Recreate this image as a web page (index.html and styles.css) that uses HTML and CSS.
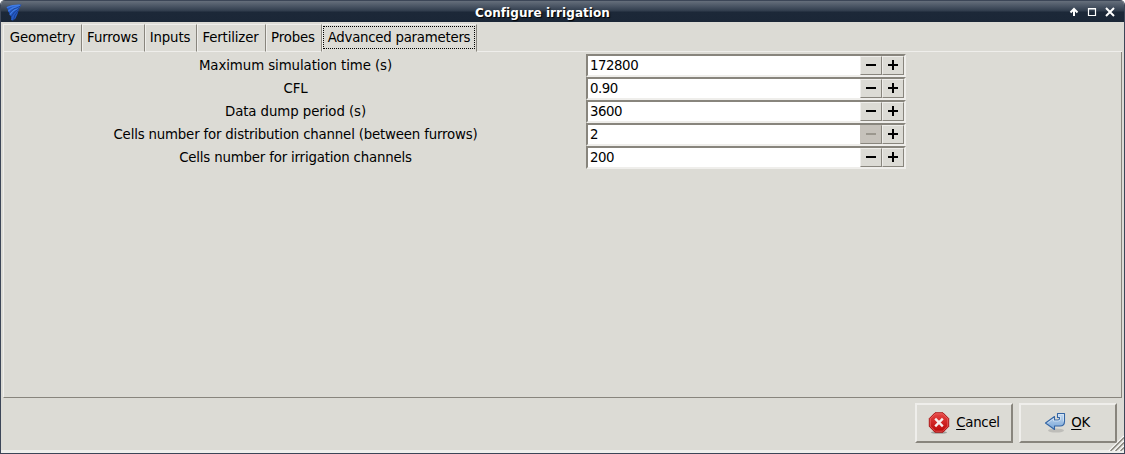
FILE: index.html
```html
<!DOCTYPE html>
<html lang="en">
<head>
<meta charset="utf-8">
<title>Configure irrigation</title>
<link rel="stylesheet" href="styles.css">
</head>
<body>
<div class="window">
  <header class="titlebar">
    <svg class="app-icon" width="16" height="18" viewBox="0 0 16 18"><path d="M.3 4.500 4 2.500 15.500 1.500 13 6 11.500 11 9.500 15.500 7 17.500 5 17Q6 13 3.500 12 4 9.500 2 8.500 2.500 6.500.3 4.500Z" fill="#2459c4"/><path d="M1 4.500Q7 2 14 2.300M2.500 8Q6 4 13 4M4 11.500Q7 6.500 12 6" fill="none" stroke="#3f7be4" stroke-width="1.300"/><path d="M3.500 10Q7 5 14 3.500M5 14Q8 8 13 5.500M7.500 17Q8 12 12 8" fill="none" stroke="#173a80" stroke-width=".7"/></svg>
    <h1 class="title">Configure irrigation</h1>
    <svg class="controls" width="48" height="12" viewBox="0 0 48 12"><path d="M6 10V3M2.500 6.500 6 3 9.500 6.500" fill="none" stroke="#fff" stroke-width="2"/><path d="M20.500 2.500h7v7h-7zM20 3h8" fill="none" stroke="#fff" stroke-width="1.200"/><path d="M38 2l8 8M46 2l-8 8" stroke="#fff" stroke-width="2"/></svg>
  </header>
  <main class="content">
    <nav class="tabs">
      <span class="tab t1">Geometry</span><span class="tab t2">Furrows</span><span class="tab t3">Inputs</span><span class="tab t4">Fertilizer</span><span class="tab t5">Probes</span><span class="tab active"><span class="focus">Advanced parameters</span></span><span class="tab-rest"></span>
    </nav>
    <section class="panel">
      <div class="row"><label>Maximum simulation time (s)</label><div class="spin"><span class="value">172800</span><button class="step minus"></button><button class="step plus"></button></div></div>
      <div class="row"><label>CFL</label><div class="spin"><span class="value">0.90</span><button class="step minus"></button><button class="step plus"></button></div></div>
      <div class="row"><label>Data dump period (s)</label><div class="spin"><span class="value">3600</span><button class="step minus"></button><button class="step plus"></button></div></div>
      <div class="row long"><label>Cells number for distribution channel (between furrows)</label><div class="spin"><span class="value">2</span><button class="step minus off"></button><button class="step plus"></button></div></div>
      <div class="row long"><label>Cells number for irrigation channels</label><div class="spin"><span class="value">200</span><button class="step minus"></button><button class="step plus"></button></div></div>
    </section>
    <footer class="actions">
      <button class="btn"><svg width="22" height="22" viewBox="0 0 22 22"><defs><linearGradient id="red" x2="0" y2="1"><stop stop-color="#e74645"/><stop offset="1" stop-color="#b90505"/></linearGradient></defs><ellipse cx="11" cy="20.500" rx="8" ry="1.300" fill="#777" opacity=".6"/><path d="M7 .8h8l5.700 5.700v8L15 20.200H7l-5.700-5.700v-8z" fill="url(#red)" stroke="#a81313"/><path d="M7.400 1.800h7.200l5.100 5.100v7.200l-5.100 5.100H7.400l-5.100-5.100V6.900z" fill="none" stroke="#ee6b6b" stroke-width=".7"/><path d="M7.200 6.700l7.600 7.600M14.800 6.700l-7.600 7.600" stroke="#f7eeee" stroke-width="2.400"/></svg><span><u>C</u>ancel</span></button>
      <button class="btn ok"><svg width="22" height="22" viewBox="0 0 22 22"><defs><linearGradient id="blue" x2="0" y2="1"><stop stop-color="#c5daf0"/><stop offset="1" stop-color="#79a6d8"/></linearGradient></defs><ellipse cx="12" cy="18.500" rx="8" ry="2" fill="#888" opacity=".35"/><path d="M13.500 1.500h7v8q0 4.500-4.500 4.500h-5.500v3.500L1.500 11l9-6.500V8H14q1.500 0 1.500-1.500v-1h-2z" fill="url(#blue)" stroke="#3465a4" stroke-width="1.100" stroke-linejoin="round"/><path d="M3.500 11 9.500 6.700V9H14q2.500 0 2.500-2V4.500h-2v-2h5v7" fill="none" stroke="#e4eef8" stroke-width=".6"/></svg><span><u>O</u>K</span></button>
    </footer>
  </main>
  <svg class="grip" width="16" height="16" viewBox="0 0 16 16"><path d="M1 16 16 1M6 16 16 6M11 16 16 11" stroke="#fff" stroke-width="1.300"/><path d="M2.500 16 16 2.500M7.500 16 16 7.500M12.500 16 16 12.500" stroke="#87847b" stroke-width="1.400"/></svg>
</div>
</body>
</html>
```
FILE: styles.css
```css
* { box-sizing: border-box; }
body { margin: 0; background: #fff; font: 13.333px/17px "DejaVu Sans", sans-serif; letter-spacing: -.08px; color: #000; }
.window { position: relative; display: flex; flex-direction: column; width: 1125px; height: 454px; border: 1px solid #3c4658; border-top: 0; border-radius: 5px 5px 0 0; overflow: hidden; background: #dcdbd5; }
.titlebar { display: flex; align-items: center; height: 22px; padding: 1px 8px 0 5px; flex: none; background: linear-gradient(#3c4657 0 1px, #666f7b 1px, #4b5665 6px, #303c4c 11px, #1c2838 12px, #1b2737 22px); }
.app-icon { flex: none; }
.title { flex: 1; margin: 0; padding: 3px 5px 0 0; text-align: center; color: #fff; font: bold 12px/17px "DejaVu Sans", sans-serif; letter-spacing: .06px; text-shadow: 1px 1px 1px #000; }
.controls { flex: none; }
.content { flex: 1; display: flex; flex-direction: column; padding: 2px 2px 0; border-bottom: 3px solid #efefec; }
.tabs { display: flex; height: 28px; flex: none; letter-spacing: -.15px; }
.tab { display: flex; align-items: center; justify-content: center; border-top: 1px solid #efeeeb; border-left: 1px solid #efeeeb; border-right: 1px solid #88857d; border-bottom: 1px solid #efeeeb; height: 28px; flex: none; padding: 0 2px 1px 0; white-space: nowrap; }
.t1 { width: 79px; padding-right: 0; }
.t2 { width: 63px; }
.t3 { width: 52px; }
.t4 { width: 69px; }
.t5 { width: 56px; }
.active { width: 155px; border-bottom-color: transparent; padding-bottom: 1px; padding-right: 1px; }
.focus { border: 1px dotted #000; height: 23px; width: 152px; line-height: 21px; text-align: center; letter-spacing: -.25px; }
.tab-rest { flex: 1; border-bottom: 1px solid #efeeeb; }
.panel { height: 346px; flex: none; padding-top: 2px; border-left: 1px solid #efeeeb; border-right: 1px solid #88857d; border-bottom: 1px solid #88857d; }
.row { display: flex; height: 23px; }
.row label { width: 583px; flex: none; margin-right: -1px; text-align: center; line-height: 23px; }
.long label { letter-spacing: -.18px; }
.spin { display: flex; width: 320px; height: 23px; border: 2px solid; border-color: #88857d #efeeeb #efeeeb #88857d; background: #fff; }
.value { flex: 1; padding-left: 2px; line-height: 19px; letter-spacing: -.45px; }
.step { width: 22px; height: 19px; padding: 0; border: 1px solid; border-color: #efeeeb #88857d #88857d #efeeeb; background: linear-gradient(#000 0 0) 5px 7px / 10px 2px no-repeat, #dcdbd5; }
.plus { background: linear-gradient(#000 0 0) 5px 7px / 10px 2px no-repeat, linear-gradient(#000 0 0) 9px 3px / 2px 10px no-repeat, #dcdbd5; }
.off { background: linear-gradient(#9b978e 0 0) 5px 7px / 10px 2px no-repeat, #c6c2bb; border-top-color: #c6c2bb; border-left-color: #c6c2bb; }
.actions { display: flex; justify-content: flex-end; gap: 6px; padding: 5px 5px 0 0; }
.btn { display: flex; align-items: center; justify-content: center; gap: 6px; width: 98px; height: 40px; padding: 0 0 1px; border: 2px solid; border-color: #efeeeb #88857d #88857d #efeeeb; background: #dcdbd5; font: inherit; letter-spacing: -.25px; color: inherit; }
.ok { gap: 5px; padding-right: 2px; }
.btn u { text-underline-offset: 2px; }
.grip { position: absolute; right: 0; bottom: 2px; }
```
